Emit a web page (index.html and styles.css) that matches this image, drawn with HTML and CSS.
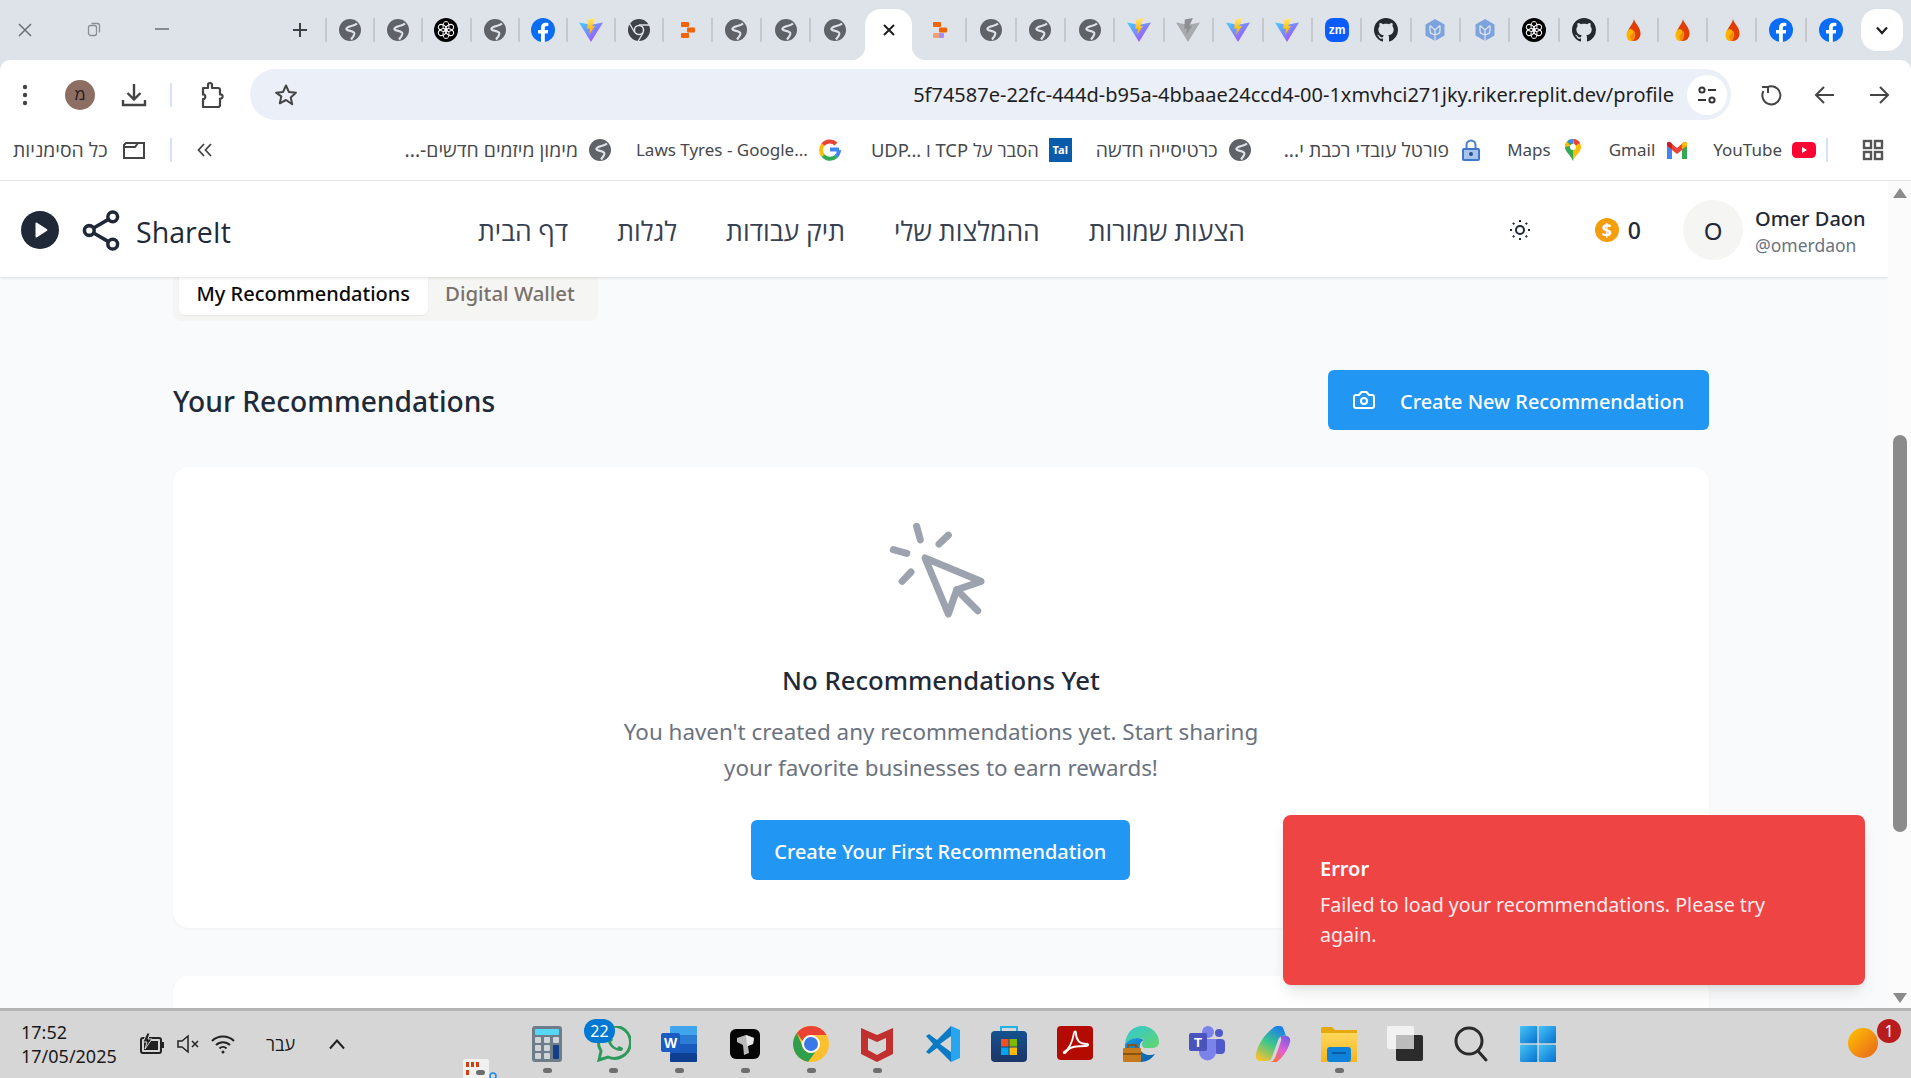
FILE: index.html
```html
<!DOCTYPE html>
<html lang="en">
<head>
<meta charset="utf-8">
<title>ShareIt</title>
<link rel="stylesheet" href="styles.css">
</head>
<body>
<svg class="defs" aria-hidden="true">
  <defs>
    <linearGradient id="gv" x1="0" y1="0" x2="1" y2="1"><stop offset="0" stop-color="#41d1ff"/><stop offset="1" stop-color="#bd34fe"/></linearGradient>
    <linearGradient id="gb" x1="0" y1="0" x2="0" y2="1"><stop offset="0" stop-color="#ffea83"/><stop offset=".5" stop-color="#ffc62b"/><stop offset="1" stop-color="#ffa800"/></linearGradient>
    <linearGradient id="gs" x1="0" y1="0" x2="0" y2="1"><stop offset="0" stop-color="#15528f"/><stop offset="1" stop-color="#1c3566"/></linearGradient>
    <linearGradient id="ge" x1="0" y1="0" x2="1" y2="1"><stop offset="0" stop-color="#30c7d8"/><stop offset="1" stop-color="#63d66b"/></linearGradient>
    <linearGradient id="ge2" x1="0" y1="0" x2="1" y2="1"><stop offset="0" stop-color="#1b9de2"/><stop offset="1" stop-color="#0c5aa6"/></linearGradient>
    <linearGradient id="gc" x1=".7" y1="0" x2=".2" y2="1"><stop offset="0" stop-color="#1a7fe8"/><stop offset=".5" stop-color="#3ec78a"/><stop offset="1" stop-color="#f9c22e"/></linearGradient>
    <linearGradient id="gc2" x1=".8" y1="0" x2=".2" y2="1"><stop offset="0" stop-color="#7b5ce8"/><stop offset=".5" stop-color="#e25fd0"/><stop offset="1" stop-color="#f7733c"/></linearGradient>
    <linearGradient id="gf" x1="0" y1="0" x2="0" y2="1"><stop offset="0" stop-color="#ffd75c"/><stop offset="1" stop-color="#f5b51e"/></linearGradient>
    <linearGradient id="gw" x1="0" y1="0" x2="1" y2="1"><stop offset="0" stop-color="#47c4f7"/><stop offset="1" stop-color="#0670cf"/></linearGradient>
    <symbol id="globe" viewBox="0 0 24 24"><circle cx="12" cy="12" r="11" fill="#5f6368"/><path d="M19 5.500C16 8.500 10 7.500 8.500 10.500 7.500 13 13 12 16 14.500 17.500 16 15 19 13 21.500" fill="none" stroke="#dee3ea" stroke-width="2.200"/></symbol>
    <symbol id="openai" viewBox="0 0 24 24"><circle cx="12" cy="12" r="12" fill="#000"/><g fill="none" stroke="#fff" stroke-width="1"><ellipse cx="12" cy="7.800" rx="3" ry="4.200"/><ellipse cx="12" cy="7.800" rx="3" ry="4.200" transform="rotate(60 12 12)"/><ellipse cx="12" cy="7.800" rx="3" ry="4.200" transform="rotate(120 12 12)"/><ellipse cx="12" cy="7.800" rx="3" ry="4.200" transform="rotate(180 12 12)"/><ellipse cx="12" cy="7.800" rx="3" ry="4.200" transform="rotate(240 12 12)"/><ellipse cx="12" cy="7.800" rx="3" ry="4.200" transform="rotate(300 12 12)"/></g></symbol>
    <symbol id="fb" viewBox="0 0 24 24"><circle cx="12" cy="12" r="12" fill="#0b6cf5"/><path d="M16.700 15.500l.5-3.500h-3.400V9.800c0-1 .5-1.900 2-1.900h1.500V5c-.9-.1-1.800-.2-2.700-.2-2.800 0-4.600 1.700-4.600 4.700V12H7v3.500h3V24h3.800v-8.500z" fill="#fff"/></symbol>
    <symbol id="vite" viewBox="0 0 24 24"><path d="M0 4.500 12 24 24 4.500 12 6.800z" fill="url(#gv)"/><path d="M17 0 8.800 1.500 8.300 11l2.700-.5-.9 6.500 6-9.300-3 .5z" fill="url(#gb)"/></symbol>
    <symbol id="vitegrey" viewBox="0 0 24 24"><path d="M0 4.500 12 24 24 4.500 12 6.800z" fill="#a9abae"/><path d="M17 0 8.800 1.500 8.300 11l2.700-.5-.9 6.500 6-9.300-3 .5z" fill="#8d8f92"/></symbol>
    <symbol id="chromemono" viewBox="0 0 24 24"><circle cx="12" cy="12" r="11" fill="#3f4347"/><g stroke="#dee3ea" stroke-width="1.400"><path d="M12 7h10.500M7.700 14.500 2.500 5.500M16.300 14.500 11 23.500"/></g><circle cx="12" cy="12" r="5.300" fill="#dee3ea"/><circle cx="12" cy="12" r="3.800" fill="#3f4347"/></symbol>
    <symbol id="rep" viewBox="0 0 24 24"><g fill="#f26207"><rect x="6" y="4" width="8" height="5" rx="1"/><rect x="12" y="9.500" width="8" height="5" rx="1"/><rect x="6" y="15" width="8" height="5" rx="1"/></g></symbol>
    <symbol id="rep2" viewBox="0 0 24 24"><rect x="6" y="4" width="8" height="5" rx="1" fill="#f26207"/><rect x="12" y="9.500" width="8" height="5" rx="1" fill="#f26207"/><rect x="6" y="15" width="8" height="5" rx="1" fill="#f2a070"/><rect x="12" y="15" width="5" height="5" rx="1" fill="#a78bfa"/></symbol>
    <symbol id="zm" viewBox="0 0 24 24"><rect width="24" height="24" rx="8" fill="#0b5cff"/><text x="12" y="16" text-anchor="middle" font-family="Liberation Sans, sans-serif" font-size="12" font-weight="700" fill="#fff">zm</text></symbol>
    <symbol id="gh" viewBox="0 0 16 16"><path fill="#24292f" d="M8 0C3.580 0 0 3.580 0 8c0 3.540 2.290 6.530 5.470 7.590.4.07.55-.17.55-.38 0-.19-.01-.82-.01-1.490-2.010.37-2.530-.49-2.690-.94-.09-.23-.48-.94-.82-1.130-.28-.15-.68-.52-.01-.53.63-.01 1.080.58 1.230.82.72 1.210 1.870.87 2.330.66.07-.52.28-.87.51-1.070-1.780-.2-3.640-.89-3.640-3.950 0-.87.31-1.590.82-2.150-.08-.2-.36-1.020.08-2.120 0 0 .67-.21 2.200.82.64-.18 1.320-.27 2-.27.68 0 1.360.09 2 .27 1.530-1.040 2.200-.82 2.200-.82.44 1.100.16 1.920.08 2.120.51.56.82 1.270.82 2.150 0 3.070-1.870 3.750-3.650 3.950.29.25.54.73.54 1.480 0 1.070-.01 1.930-.01 2.200 0 .21.15.46.55.38A8.013 8.013 0 0016 8c0-4.420-3.580-8-8-8z"/></symbol>
    <symbol id="hex" viewBox="0 0 24 24"><path d="M12 1 21.500 6.500v11L12 23 2.500 17.500v-11z" fill="#7da3de"/><path d="M12 23V12M7 7.500 12 12l5-4.500M7 7.500v5c0 2.500 2 4 5 4s5-1.500 5-4v-5" fill="none" stroke="#dee3ea" stroke-width="1.300"/></symbol>
    <symbol id="fire" viewBox="0 0 24 24"><path d="M13 1c.5 4 6.500 8 6.500 14.500 0 4.500-3 7.500-6.500 7.500s-6.500-3-6.500-7C6.500 10 12 7 13 1z" fill="#e23c00"/><ellipse cx="9.500" cy="17" rx="4" ry="6" fill="#ffb300"/><path d="M13.500 13c1.500 2.500 1 7-1.500 10-2-1-3-3-2.800-5z" fill="#f58a07"/></symbol>
  </defs>
</svg>

<header class="chrome">
  <div class="tabstrip">
    <div class="winctl">
      <span class="winbtn"><svg width="18" height="18" viewBox="0 0 18 18"><path d="M3 3l12 12M15 3 3 15" stroke="#6a6f75" stroke-width="1.500"/></svg></span>
      <span class="winbtn"><svg width="16" height="16" viewBox="0 0 16 16"><rect x="2.500" y="4.500" width="8" height="10" rx="2" fill="none" stroke="#8a8e94" stroke-width="1.300"/><path d="M5.500 2.500h6a2 2 0 0 1 2 2v7" fill="none" stroke="#8a8e94" stroke-width="1.300"/></svg></span>
      <span class="winbtn"><svg width="16" height="16" viewBox="0 0 16 16"><path d="M1 8h14" stroke="#6a6f75" stroke-width="1.500"/></svg></span>
    </div>
    <span class="plus"><svg width="18" height="18" viewBox="0 0 18 18"><path d="M9 2v14M2 9h14" stroke="#3c4043" stroke-width="2"/></svg></span>
    <span class="tab"><svg class="fav"><use href="#globe"/></svg></span>
    <span class="tab"><svg class="fav"><use href="#globe"/></svg></span>
    <span class="tab"><svg class="fav"><use href="#openai"/></svg></span>
    <span class="tab"><svg class="fav"><use href="#globe"/></svg></span>
    <span class="tab"><svg class="fav"><use href="#fb"/></svg></span>
    <span class="tab"><svg class="fav"><use href="#vite"/></svg></span>
    <span class="tab"><svg class="fav"><use href="#chromemono"/></svg></span>
    <span class="tab"><svg class="fav"><use href="#rep"/></svg></span>
    <span class="tab wide"><svg class="fav"><use href="#globe"/></svg></span>
    <span class="tab wide"><svg class="fav"><use href="#globe"/></svg></span>
    <span class="tab wide"><svg class="fav"><use href="#globe"/></svg></span>
    <span class="tab-active"><svg width="16" height="16" viewBox="0 0 16 16"><path d="M3 3l10 10M13 3 3 13" stroke="#1f1f1f" stroke-width="2"/></svg></span>
    <span class="tab-next"><svg class="fav"><use href="#rep2"/></svg></span>
    <span class="tab wide"><svg class="fav"><use href="#globe"/></svg></span>
    <span class="tab wide"><svg class="fav"><use href="#globe"/></svg></span>
    <span class="tab wide"><svg class="fav"><use href="#globe"/></svg></span>
    <span class="tab wide"><svg class="fav"><use href="#vite"/></svg></span>
    <span class="tab wide"><svg class="fav"><use href="#vitegrey"/></svg></span>
    <span class="tab wide"><svg class="fav"><use href="#vite"/></svg></span>
    <span class="tab wide"><svg class="fav"><use href="#vite"/></svg></span>
    <span class="tab wide"><svg class="fav"><use href="#zm"/></svg></span>
    <span class="tab wide"><svg class="fav"><use href="#gh"/></svg></span>
    <span class="tab wide"><svg class="fav"><use href="#hex"/></svg></span>
    <span class="tab wide"><svg class="fav"><use href="#hex"/></svg></span>
    <span class="tab wide"><svg class="fav"><use href="#openai"/></svg></span>
    <span class="tab wide"><svg class="fav"><use href="#gh"/></svg></span>
    <span class="tab wide"><svg class="fav"><use href="#fire"/></svg></span>
    <span class="tab wide"><svg class="fav"><use href="#fire"/></svg></span>
    <span class="tab wide"><svg class="fav"><use href="#fire"/></svg></span>
    <span class="tab wide"><svg class="fav"><use href="#fb"/></svg></span>
    <span class="tab wide"><svg class="fav"><use href="#fb"/></svg></span>
    <span class="tabsearch"><svg width="16" height="16" viewBox="0 0 16 16"><path d="M3 5.500 8 11l5-5.500" fill="none" stroke="#1f1f1f" stroke-width="2.200"/></svg></span>
  </div>

  <div class="toolbar">
    <span class="tb-dots"><svg width="6" height="22" viewBox="0 0 6 22"><circle cx="3" cy="3" r="2.200" fill="#444"/><circle cx="3" cy="11" r="2.200" fill="#444"/><circle cx="3" cy="19" r="2.200" fill="#444"/></svg></span>
    <span class="tb-avatar"><span class="tb-avatar-c">מ</span></span>
    <span class="tb-btn"><svg width="26" height="26" viewBox="0 0 26 26" fill="none" stroke="#444" stroke-width="2.400"><path d="M13 2v15M6.500 11 13 17.500 19.500 11M2 18v5h22v-5"/></svg></span>
    <span class="tb-sep"></span>
    <span class="tb-btn"><svg width="26" height="28" viewBox="0 0 26 28" fill="none" stroke="#444" stroke-width="2.200"><path d="M4 7h5V3.500c0-2 4-2 4 0V7h6a2 2 0 0 1 2 2v4.500c3.500-.8 3.500 4.800 0 4V24a2 2 0 0 1-2 2H4V18c3 .5 3-5 0-4.500z" stroke-linejoin="round"/></svg></span>
    <div class="omnibox">
      <span class="star"><svg width="24" height="24" viewBox="0 0 24 24"><path d="M12 2.500l2.900 6.400 7 .8-5.200 4.700 1.500 6.900L12 17l-6.200 3.300 1.500-6.900L2.100 9.700l7-.8z" fill="none" stroke="#444" stroke-width="2" stroke-linejoin="round"/></svg></span>
      <span class="url">5f74587e-22fc-444d-b95a-4bbaae24ccd4-00-1xmvhci271jky.riker.replit.dev/profile</span>
      <span class="tune"><svg width="22" height="22" viewBox="0 0 22 22" fill="none" stroke="#333" stroke-width="2"><circle cx="6" cy="6" r="2.600"/><path d="M12 6h8M2 16h8"/><circle cx="16" cy="16" r="2.600"/></svg></span>
    </div>
    <div class="tb-navs">
      <span class="tb-nav"><svg width="24" height="24" viewBox="0 0 24 24" fill="none" stroke="#444" stroke-width="2"><path d="M8 4.500A9 9 0 1 1 4.500 8M9 10V4H3"/></svg></span>
      <span class="tb-nav"><svg width="24" height="24" viewBox="0 0 24 24" fill="none" stroke="#444" stroke-width="2"><path d="M21 12H4M11 4l-8 8 8 8"/></svg></span>
      <span class="tb-nav"><svg width="24" height="24" viewBox="0 0 24 24" fill="none" stroke="#444" stroke-width="2"><path d="M3 12h17M13 4l8 8-8 8"/></svg></span>
    </div>
  </div>

  <div class="bookmarks">
    <span class="bm b-all"><span class="he" dir="rtl">כל הסימניות</span><svg class="bic" viewBox="0 0 24 24" fill="none" stroke="#444" stroke-width="2"><path d="M2 20V7l2-2h18v15z"/><path d="M2 9h11l3-4"/></svg></span>
    <span class="bm-sep"></span>
    <span class="bm-more"><svg width="18" height="18" viewBox="0 0 18 18" fill="none" stroke="#444" stroke-width="1.800"><path d="M8 3 2.500 9 8 15M15 3 9.500 9 15 15"/></svg></span>
    <div class="bm-list">
      <span class="bm"><span class="he" dir="rtl">מימון מיזמים חדשים-...</span><svg class="bic"><use href="#globe"/></svg></span>
      <span class="bm">Laws Tyres - Google...<svg class="bic" viewBox="0 0 24 24" fill="none" stroke-width="4"><path d="M21 11.500h-9" stroke="#4285f4"/><path d="M21 12a9 9 0 0 1-3 6.500" stroke="#4285f4"/><path d="M18 18.500A9 9 0 0 1 5 17.500" stroke="#34a853"/><path d="M5 17.500a9 9 0 0 1 0-11" stroke="#fbbc05"/><path d="M5 6.500a9 9 0 0 1 13-.5" stroke="#ea4335"/></svg></span>
      <span class="bm bm-mix">UDP... ו TCP הסבר על<span class="tal">Tal</span></span>
      <span class="bm"><span class="he" dir="rtl">כרטיסייה חדשה</span><svg class="bic"><use href="#globe"/></svg></span>
      <span class="bm b-gap"><span class="he" dir="rtl">פורטל עובדי רכבת י...</span><svg class="bic" viewBox="0 0 24 24"><path d="M7.500 11V7a4.500 4.500 0 0 1 9 0v4" fill="none" stroke="#4a7fc9" stroke-width="2"/><rect x="3" y="10" width="18" height="13" rx="2" fill="#3f78c9"/><rect x="5" y="12" width="14" height="9" fill="#a9c4ea"/><circle cx="12" cy="16" r="2" fill="#28508f"/></svg></span>
      <span class="bm">Maps<svg class="bic" viewBox="0 0 24 24"><path d="M12 1a8 8 0 0 1 8 8c0 5-5 7-8 14z" fill="#fbbc04"/><path d="M12 1a8 8 0 0 0-8 8c0 5 5 7 8 14z" fill="#34a853"/><path d="M6 3.500A8 8 0 0 1 12 1v5z" fill="#4285f4"/><path d="M12 1a8 8 0 0 1 7 4l-5 3z" fill="#ea4335"/><path d="M4 9a8 8 0 0 1 2-5.500L10 8z" fill="#fbbc04"/><circle cx="12" cy="9" r="3" fill="#fff"/></svg></span>
      <span class="bm">Gmail<svg class="bic" viewBox="0 0 24 24"><path d="M2 8v13h5V11z" fill="#4285f4"/><path d="M22 8v13h-5V11z" fill="#34a853"/><path d="M2 5v3l10 8 10-8V5l-3-1-7 6-7-6z" fill="#ea4335"/><path d="M2 5a2.500 2.500 0 0 1 3-1l2 2v5L2 8z" fill="#c5221f"/><path d="M22 5a2.500 2.500 0 0 0-3-1l-2 2v5l5-3z" fill="#fbbc04"/></svg></span>
      <span class="bm">YouTube<svg class="bic" viewBox="0 0 24 24"><rect y="4" width="24" height="16" rx="4.500" fill="#ff0033"/><path d="M10 9v6l5-3z" fill="#fff"/></svg></span>
    </div>
    <span class="bm-sep bm-sep-r"></span>
    <span class="bm-grid"><svg width="22" height="22" viewBox="0 0 22 22" fill="none" stroke="#555" stroke-width="2.400"><rect x="2" y="2" width="7" height="7"/><rect x="13" y="2" width="7" height="7"/><rect x="2" y="13" width="7" height="7"/><rect x="13" y="13" width="7" height="7"/></svg></span>
  </div>
</header>

<div class="viewport">
  <div class="page">
    <nav class="nav">
      <span class="play"><svg width="38" height="38" viewBox="0 0 38 38"><circle cx="19" cy="19" r="19" fill="#1f2937"/><path d="M14.500 12.500v13a1 1 0 0 0 1.500.8l10-6.500a1 1 0 0 0 0-1.600l-10-6.500a1 1 0 0 0-1.500.8z" fill="#fff"/></svg></span>
      <span class="logo"><svg width="38" height="41" viewBox="2.500 1.500 19 21" fill="none" stroke="#1f2937" stroke-width="1.800"><circle cx="18" cy="5" r="2.500"/><circle cx="6" cy="12" r="2.500"/><circle cx="18" cy="19" r="2.500"/><path d="M8.200 13.300l7.600 4.400M15.800 6.300l-7.600 4.400"/></svg></span>
      <span class="brand">ShareIt</span>
      <div class="links">
        <span class="link">דף הבית</span>
        <span class="link">לגלות</span>
        <span class="link">תיק עבודות</span>
        <span class="link">ההמלצות שלי</span>
        <span class="link">הצעות שמורות</span>
      </div>
      <span class="sun"><svg width="24" height="24" viewBox="0 0 24 24" fill="none" stroke="#1f2937" stroke-width="2"><circle cx="12" cy="12" r="4"/><path d="M12 2v2M12 20v2M4.900 4.900l1.400 1.400M17.700 17.700l1.400 1.400M2 12h2M20 12h2M6.300 17.700l-1.400 1.400M19.100 4.900l-1.400 1.400"/></svg></span>
      <span class="coin"><span class="coin-c">$</span></span>
      <span class="coin-n">0</span>
      <span class="avatar">O</span>
      <div class="who"><span class="who-n">Omer Daon</span><span class="who-h">@omerdaon</span></div>
    </nav>
    <main class="content">
      <div class="tabs">
        <span class="ptab ptab-on">My Recommendations</span>
        <span class="ptab ptab-off">Digital Wallet</span>
      </div>
      <div class="head">
        <h2 class="h-title">Your Recommendations</h2>
        <span class="btn btn-new"><svg class="cam" width="24" height="24" viewBox="0 0 24 24" fill="none" stroke="#fff" stroke-width="2" stroke-linejoin="round"><path d="M14.500 4h-5L7 7H4a2 2 0 0 0-2 2v9a2 2 0 0 0 2 2h16a2 2 0 0 0 2-2V9a2 2 0 0 0-2-2h-3z"/><circle cx="12" cy="13" r="3"/></svg>Create New Recommendation</span>
      </div>
      <section class="card">
        <svg class="empty-ic" viewBox="0 0 24 24" fill="none" stroke="#9ca3af" stroke-width="1.500" stroke-linecap="round" stroke-linejoin="round"><path d="m9 9 5 12 1.800-5.200L21 14Z"/><path d="M7.200 2.200 8 5.100"/><path d="m5.100 8-2.900-.8"/><path d="M14 4.100 12 6"/><path d="m6 12-1.900 2"/><path d="M15.800 15.800 20.300 20.300"/></svg>
        <h3 class="empty-t">No Recommendations Yet</h3>
        <p class="empty-p">You haven't created any recommendations yet. Start sharing your favorite businesses to earn rewards!</p>
        <span class="btn btn-first">Create Your First Recommendation</span>
      </section>
      <section class="card card-next"></section>
    </main>
  </div>
  <div class="scrollbar">
    <span class="sb-up"></span>
    <span class="sb-thumb"></span>
    <span class="sb-down"></span>
  </div>
  <aside class="toast">
    <div class="toast-t">Error</div>
    <div class="toast-m">Failed to load your recommendations. Please try again.</div>
  </aside>
</div>

<footer class="taskbar">
  <div class="clock"><span>17:52</span><span>17/05/2025</span></div>
  <div class="tray">
    <svg width="26" height="24" viewBox="0 0 26 24"><rect x="2" y="6" width="20" height="15" rx="2" fill="none" stroke="#222" stroke-width="2"/><rect x="5" y="9" width="14" height="9" fill="#222"/><rect x="22" y="10" width="3" height="6" fill="#222"/><path d="M8 1 4 10h4l-2 7 7-10H9l2-6z" fill="#222" stroke="#d6d6d6"/></svg>
    <svg width="24" height="22" viewBox="0 0 24 22" fill="none" stroke="#222" stroke-width="1.500"><path d="M2 8h4l6-5v16l-6-5H2z"/><path d="M16 8l6 6M22 8l-6 6"/></svg>
    <svg width="26" height="24" viewBox="0 0 26 24" fill="none" stroke="#222" stroke-width="2"><path d="M2 9a16 16 0 0 1 22 0M6 13a10 10 0 0 1 14 0M9.500 16.500a5 5 0 0 1 7 0"/><circle cx="13" cy="20" r="1.500" fill="#222" stroke="none"/></svg>
    <span class="lang">עבר</span>
    <svg width="18" height="12" viewBox="0 0 18 12" fill="none" stroke="#222" stroke-width="2"><path d="M2 10.500 9 2.500l7 8"/></svg>
  </div>
  <div class="apps">
    <span class="app"><svg class="app-ic" viewBox="0 0 36 36"><rect x="3" width="30" height="36" rx="3" fill="#6f7d8b"/><rect x="6" y="3" width="24" height="6" rx="1" fill="#56d7f5"/><g fill="#cfd4d9"><rect x="6" y="11" width="6" height="6" rx="1"/><rect x="15" y="11" width="6" height="6" rx="1"/><rect x="24" y="11" width="6" height="6" rx="1"/><rect x="6" y="19" width="6" height="6" rx="1"/><rect x="15" y="19" width="6" height="6" rx="1"/><rect x="6" y="27" width="6" height="6" rx="1"/><rect x="15" y="27" width="6" height="6" rx="1"/></g><rect x="24" y="19" width="6" height="14" rx="1" fill="#123f86"/></svg><i class="dot"></i></span>
    <span class="app app-wa"><svg class="app-ic" viewBox="0 0 36 36" fill="none" stroke="#2c9a5b" stroke-width="3"><path d="M4 34l2-9A16 16 0 1 1 13 31z"/><path d="M12 11c0 7 6 14 14 14 1.500 0 2-2 2-3l-4-2-2 2c-3-1-5-4-6-6l2-2-2-4c-1 0-4 0-4 1z" fill="#2c9a5b" stroke="none"/></svg><span class="wa-badge">22</span><i class="dot"></i></span>
    <span class="app"><svg class="app-ic" viewBox="0 0 36 36"><rect x="9" width="27" height="9" rx="1" fill="#41a5ee"/><rect x="9" y="9" width="27" height="9" fill="#2b7cd3"/><rect x="9" y="18" width="27" height="9" fill="#185abd"/><rect x="9" y="27" width="27" height="9" rx="1" fill="#103f91"/><rect y="7" width="19" height="19" rx="2" fill="#1a5bc4"/><text x="9.500" y="22" text-anchor="middle" font-family="Liberation Sans, sans-serif" font-size="14" font-weight="700" fill="#fff">W</text></svg><i class="dot"></i></span>
    <span class="app"><svg class="app-ic" viewBox="0 0 36 36"><rect x="3" y="3" width="30" height="30" rx="6" fill="#050505"/><path d="M10 12 19 9l8 3-1 6-5 2 1 7-5 2-1-10-6-3z" fill="#b9b9b9"/><path d="M19 9l8 3-1 6-6 2z" fill="#e7e7e7"/></svg><i class="dot"></i></span>
    <span class="app"><svg class="app-ic" viewBox="0 0 36 36"><circle cx="18" cy="18" r="18" fill="#fbc02d"/><path d="M3.900 6.900A18 18 0 0 0 15.200 35.800L22.500 25.800A9 9 0 0 1 10.200 22.500z" fill="#2f9e4d"/><path d="M18 0a18 18 0 0 1 15.600 9H18a9 9 0 0 0-8.500 6L3.900 6.900A18 18 0 0 1 18 0z" fill="#ea4335"/><circle cx="18" cy="18" r="9" fill="#fff"/><circle cx="18" cy="18" r="7" fill="#3b78e7"/></svg><i class="dot"></i></span>
    <span class="app"><svg class="app-ic" viewBox="0 0 36 36"><path fill-rule="evenodd" d="M2 2 18 9 34 2V28L18 36 2 28zM9 12V24l9 5 9-5V12L18 16z" fill="#c1302e"/></svg><i class="dot"></i></span>
    <span class="app"><svg class="app-ic" viewBox="0 0 36 36"><path d="M26 0 12 14 4 8 1 10l7 8-7 8 3 2 8-6 14 14z" fill="#0b7ac4"/><path d="M26 0l9 4v28l-9 4z" fill="#26a6f0"/><path d="M26 10v16L15 18z" fill="#d6d6d6"/></svg><i class="dot dot-off"></i></span>
    <span class="app"><svg class="app-ic" viewBox="0 0 36 36"><path d="M10 7V1h16v6" fill="none" stroke="#1eb4ea" stroke-width="2"/><rect y="5" width="36" height="31" rx="4" fill="url(#gs)"/><rect x="10" y="13" width="7.500" height="7.500" fill="#f25022"/><rect x="18.500" y="13" width="7.500" height="7.500" fill="#7fba00"/><rect x="10" y="21.500" width="7.500" height="7.500" fill="#00a4ef"/><rect x="18.500" y="21.500" width="7.500" height="7.500" fill="#ffb900"/></svg><i class="dot dot-off"></i></span>
    <span class="app"><svg class="app-ic" viewBox="0 0 36 36"><rect width="36" height="34" rx="4" fill="#b30b00"/><path d="M7 26c4-2 8-8 10-19 .5-2 2-2 2 0 0 7 4 11 11 11 2 0 1.500 2-1 2-8 0-16 0-20 6-1 2-3 1-2 0z" fill="none" stroke="#fff" stroke-width="1.800"/></svg><i class="dot dot-off"></i></span>
    <span class="app"><svg class="app-ic" viewBox="0 0 36 36"><path d="M2 18C3 6 11 0 19 0c10 0 17 8 17 16 0 4-3 6-8 6h-6c-4-1-4-5-1-8-3-3-12-3-19 4z" fill="url(#ge)"/><path d="M2 18c5-6 13-8 19-4-5 2-6 9-1 13 3 2 8 3 12 1-3 5-9 8-14 8C10 36 1 28 2 18z" fill="url(#ge2)"/><rect y="22" width="18" height="14" rx="1" fill="#c67a1c"/><path d="M5 22v-3h8v3" fill="none" stroke="#8a5312" stroke-width="2"/><rect y="27" width="18" height="2" fill="#8a5312"/></svg><i class="dot dot-off"></i></span>
    <span class="app"><svg class="app-ic" viewBox="0 0 36 36"><circle cx="30" cy="7" r="4" fill="#5059c9"/><rect x="25" y="13" width="11" height="15" rx="4" fill="#5059c9"/><circle cx="19" cy="6" r="6" fill="#7b83eb"/><path d="M10 13h17v13a8.500 8.500 0 0 1-17 0z" fill="#7b83eb"/><rect y="7" width="18" height="18" rx="2" fill="#4b53bc"/><text x="9" y="21" text-anchor="middle" font-family="Liberation Sans, sans-serif" font-size="13" font-weight="700" fill="#fff">T</text></svg><i class="dot dot-off"></i></span>
    <span class="app"><svg class="app-ic" viewBox="0 0 36 36"><path d="M18 2c1-1 2-2 4-2h3c2 0 3 1 3.500 3L31 10c-3-1-6 0-7.500 3L17 31c-1 3-3 4-6 4H6c-4 0-6-3-5-7C3 18 10 8 18 2z" fill="url(#gc)"/><path d="M25 10h6c3 0 5 3 4 6-2 8-7 15-12 19-1 1-2 1-3 1h-6c3 0 5-2 6-4l6-17c.5-2 0-4-1-5z" fill="url(#gc2)"/></svg><i class="dot dot-off"></i></span>
    <span class="app"><svg class="app-ic" viewBox="0 0 36 36"><path d="M0 3a2 2 0 0 1 2-2h9l3 3h22v32H0z" fill="#e5a90b"/><path d="M0 7h36v29H0z" fill="url(#gf)"/><rect x="6" y="21" width="24" height="15" rx="3" fill="#0e82d9"/><rect x="11" y="26" width="14" height="2" fill="#0a5aa5"/></svg><i class="dot"></i></span>
    <span class="app"><svg class="app-ic" viewBox="0 0 36 36"><rect x="9" y="9" width="27" height="26" rx="2" fill="#2b2b2b"/><rect x="0" y="0" width="27" height="23" rx="2" fill="#f2f2f2"/><rect x="9" y="9" width="18" height="14" fill="#bcbcbc"/></svg><i class="dot dot-off"></i></span>
    <span class="app"><svg class="app-ic" viewBox="0 0 36 36" fill="none" stroke="#2a2a2a" stroke-width="3"><circle cx="16" cy="15" r="13"/><path d="M25 25l8 9" stroke-linecap="round"/></svg><i class="dot dot-off"></i></span>
    <span class="app app-win"><svg class="app-ic" viewBox="0 0 36 36"><rect width="17.300" height="17.300" rx="1" fill="url(#gw)"/><rect x="18.700" width="17.300" height="17.300" rx="1" fill="url(#gw)"/><rect y="18.700" width="17.300" height="17.300" rx="1" fill="url(#gw)"/><rect x="18.700" y="18.700" width="17.300" height="17.300" rx="1" fill="url(#gw)"/></svg><i class="dot dot-off"></i></span>
  </div>
  <svg class="tb-widget" width="34" height="20" viewBox="0 0 34 20"><rect width="26" height="20" rx="2" fill="#f1f1f1"/><g fill="#d1400f"><rect x="3" y="3" width="3" height="5"/><rect x="8" y="3" width="3" height="5"/><rect x="13" y="3" width="3" height="5"/><rect x="3" y="11" width="3" height="5"/></g><rect x="13" y="11" width="9" height="5" rx="2.500" fill="#6e6e6e"/><circle cx="30" cy="17" r="3" fill="none" stroke="#1e88e5" stroke-width="1.500"/></svg>
  <span class="notify"><span class="notify-b">1</span></span>
</footer>
</body>
</html>
```

FILE: styles.css
```css
* { box-sizing: border-box; }
html, body { margin: 0; height: 100%; }
body {
  width: 1911px; height: 1078px; overflow: hidden;
  display: flex; flex-direction: column;
  font-family: "Noto Sans", "Open Sans", "Liberation Sans", sans-serif;
  background: #dee3ea;
}
.defs { position: absolute; width: 0; height: 0; }

/* browser chrome */
.chrome { flex: none; background: #dee3ea; }
.tabstrip { height: 60px; display: flex; align-items: center; }
.winctl { display: flex; gap: 18.500px; }
.winbtn { width: 50px; display: flex; justify-content: center; }
.plus { width: 50px; margin-left: 88px; display: flex; justify-content: center; }
.tab { width: 48.200px; height: 24px; border-left: 2px solid #c6c8cb; display: flex; justify-content: center; align-items: center; flex: none; }
.tab.wide { width: 49.400px; }
.fav { width: 24px; height: 24px; display: block; }
.tab-active { position: relative; align-self: flex-end; width: 47px; height: 51px; margin-left: 6.500px; background: #fff; border-radius: 16px 16px 0 0; display: flex; align-items: center; justify-content: center; padding-bottom: 9px; }
.tab-active::before, .tab-active::after { content: ""; position: absolute; bottom: 0; width: 14px; height: 14px; }
.tab-active::before { left: -14px; background: radial-gradient(circle at 0 0, transparent 14px, #fff 14.500px); }
.tab-active::after { right: -14px; background: radial-gradient(circle at 100% 0, transparent 14px, #fff 14.500px); }
.tab-next { width: 53px; display: flex; justify-content: center; }
.tabsearch { width: 42px; height: 42px; margin-left: 7px; background: #fff; border-radius: 16px; display: flex; align-items: center; justify-content: center; }

.toolbar { height: 60px; padding-top: 9px; background: #fff; border-radius: 10px 10px 0 0; display: flex; align-items: center; }
.tb-dots { width: 50px; display: flex; justify-content: center; }
.tb-avatar { width: 60px; display: flex; justify-content: center; }
.tb-avatar-c { width: 30px; height: 30px; border-radius: 50%; background: #8d6e63; color: #2b1f1b; font-size: 16px; font-family: "Liberation Sans", sans-serif; display: flex; align-items: center; justify-content: center; }
.tb-btn { width: 48px; display: flex; justify-content: center; }
.tb-sep { width: 2px; height: 24px; margin: 0 16px 0 12px; background: #d3e3fd; }
.omnibox { width: 1481px; height: 51px; margin-left: 14px; background: #ebf0f8; border-radius: 26px; display: flex; align-items: center; padding-left: 24px; }
.star { width: 24px; display: flex; }
.url { flex: 1; text-align: right; font-size: 20px; color: #1f1f1f; white-space: nowrap; }
.tune { width: 40px; height: 40px; margin: 0 4px 0 13px; border-radius: 50%; background: #fff; display: flex; align-items: center; justify-content: center; }
.tb-navs { display: flex; margin-left: 13px; }
.tb-nav { width: 54px; display: flex; justify-content: center; }

.bookmarks { height: 61px; background: #fff; border-bottom: 1px solid #e1e3e6; padding: 0 0 1px 13px; display: flex; align-items: center; }
.bm { display: flex; align-items: center; gap: 10px; font-size: 17px; color: #47494c; white-space: nowrap; }
.he { font-size: 19.400px; }
.bm-mix { font-size: 18.400px; margin-left: 5px; }
.b-all { gap: 14px; }
.bic { width: 24px; height: 24px; flex: none; }
.bm-sep { width: 2px; height: 24px; margin-left: 24px; background: #d3e3fd; }
.bm-more { margin-left: 24px; display: flex; }
.bm-list { margin-left: auto; display: flex; gap: 24px; align-items: center; }
.b-gap { margin-left: 8px; }
.tal { width: 23px; height: 24px; background: #0a5cab; color: #fff; font-size: 11px; font-weight: 700; display: flex; align-items: center; justify-content: center; }
.bm-sep-r { margin-left: 10px; }
.bm-grid { margin: 0 27px 0 34px; display: flex; }

/* page */
.viewport { flex: none; height: 827px; position: relative; display: flex; overflow: hidden; background: #f9fafb; }
.page { width: 1888px; overflow: hidden; }
.nav { position: relative; z-index: 2; height: 96px; padding: 2px 0 0 21px; background: #fff; box-shadow: 0 1px 3px rgba(0,0,0,.12); display: flex; align-items: center; }
.play { display: flex; }
.logo { display: flex; margin-left: 23px; }
.brand { margin: 2px 0 0 16px; font-family: "Open Sans", "Noto Sans", sans-serif; font-size: 28.600px; font-weight: 500; color: #1f2937; }
.links { display: flex; gap: 49px; margin-left: 247px; padding-top: 1px; }
.link { font-family: "Open Sans", "Liberation Sans", sans-serif; font-size: 26.500px; font-weight: 500; color: #374151; }
.sun { display: flex; margin-left: auto; }
.coin { margin-left: 63px; width: 24px; height: 24px; border-radius: 50%; background: #f59e0b; display: flex; align-items: center; justify-content: center; }
.coin-c { color: #fff; font-size: 18px; font-weight: 700; line-height: 1; }
.coin-n { margin-left: 9px; font-size: 23px; font-weight: 500; color: #1f2937; }
.avatar { margin-left: 42px; width: 60px; height: 60px; border-radius: 50%; background: #f5f5f4; color: #1f2937; font-size: 24px; display: flex; align-items: center; justify-content: center; }
.who { margin: 2px 23px 0 12px; width: 110px; display: flex; flex-direction: column; white-space: nowrap; }
.who-n { font-size: 20px; font-weight: 500; color: #1f2937; line-height: 28px; }
.who-h { font-size: 17.500px; color: #6b7280; line-height: 24px; }

.content { margin: -12px 179px 0 173px; }
.tabs { display: inline-flex; padding: 6px; background: #f5f5f4; border-radius: 8px; vertical-align: top; }
.ptab { height: 44px; padding: 0 17.500px; display: flex; align-items: center; font-size: 20px; font-weight: 500; color: #78716c; border-radius: 6px; }
.ptab-off { font-size: 20.400px; }
.ptab-on { background: #fff; color: #0c0a09; box-shadow: 0 1px 2px rgba(0,0,0,.06); }
.head { margin-top: 49px; display: flex; align-items: center; justify-content: space-between; }
.h-title { margin: 2px 0 0; font-size: 28.200px; font-weight: 500; color: #1f2937; }
.btn { height: 60px; padding-top: 2px; background: #2196f3; color: #fff; border-radius: 6px; font-size: 19.900px; font-weight: 500; display: flex; align-items: center; white-space: nowrap; }
.btn-new { padding-left: 24px; padding-right: 24px; gap: 24px; width: 381px; }
.cam { flex: none; margin-top: -2px; }
.card { margin-top: 37px; padding: 49px 0 48px; background: #fff; border-radius: 16px; box-shadow: 0 1px 3px rgba(0,0,0,.04); display: flex; flex-direction: column; align-items: center; }
.empty-ic { width: 112px; height: 112px; display: block; margin-right: 4px; }
.empty-t { margin: 35px 0 0; font-size: 25.700px; line-height: 36px; font-weight: 500; color: #1f2937; }
.empty-p { margin: 15px 0 0; width: 672px; font-size: 22.400px; line-height: 36px; color: #6b7280; text-align: center; }
.btn-first { margin: 34px 1.400px 0 0; width: 379px; justify-content: center; }
.card-next { margin-top: 48px; height: 200px; padding: 0; }

.scrollbar { width: 23px; padding: 7px 0 5px; background: #fbfbfb; display: flex; flex-direction: column; align-items: center; }
.sb-up { width: 0; height: 0; border: 7px solid transparent; border-top: 0; border-bottom: 10px solid #8b8b8b; }
.sb-thumb { width: 14px; height: 397px; margin-top: 237px; background: #8b8b8b; border-radius: 7px; }
.sb-down { width: 0; height: 0; margin-top: auto; border: 7px solid transparent; border-bottom: 0; border-top: 10px solid #8b8b8b; }

.toast { position: absolute; right: 46px; bottom: 23px; z-index: 3; width: 582px; padding: 40px 37px 35px; background: #ef4444; color: #fff; border-radius: 8px; box-shadow: 0 10px 15px -3px rgba(0,0,0,.1), 0 4px 6px -4px rgba(0,0,0,.1); }
.toast-t { font-size: 20px; line-height: 28px; font-weight: 600; }
.toast-m { margin-top: 7px; max-width: 490px; font-size: 19.650px; line-height: 30px; opacity: .9; }

/* taskbar */
.taskbar { position: relative; flex: none; height: 70px; background: #d6d6d6; border-top: 3px solid #b3b3b3; display: flex; align-items: flex-start; }
.clock { width: 135px; padding: 10px 0 0 21px; display: flex; flex-direction: column; gap: 2px; font-size: 18px; line-height: 22px; color: #1a1a1a; white-space: nowrap; }
.tray { width: 379px; padding-top: 21px; display: flex; align-items: center; color: #1a1a1a; }
.tray svg:nth-child(1) { margin-left: 4px; }
.tray svg:nth-child(2) { margin-left: 11px; }
.tray svg:nth-child(3) { margin-left: 10px; }
.tray svg:nth-child(5) { margin-left: 33px; }
.lang { margin-left: 30px; font-size: 18px; font-family: "Open Sans", "Liberation Sans", sans-serif; }
.apps { display: flex; padding-top: 15px; }
.app { position: relative; width: 66px; display: flex; flex-direction: column; align-items: center; gap: 6px; }
.app-win { margin-left: 1px; }
.app-ic { width: 36px; height: 36px; display: block; }
.dot { width: 9px; height: 5px; border-radius: 3px; background: #6e6e6e; }
.dot-off { visibility: hidden; }
.wa-badge { position: absolute; left: 4px; top: -7px; width: 31px; height: 24px; border-radius: 12px; background: #0078d4; color: #fff; font-size: 16px; display: flex; align-items: center; justify-content: center; }
.tb-widget { position: absolute; left: 463px; top: 48px; }
.notify { position: absolute; left: 1848px; top: 17px; width: 30px; height: 30px; border-radius: 50%; background: linear-gradient(135deg, #ffc400, #e8631c); }
.notify-b { position: absolute; left: 29px; top: -9px; width: 24px; height: 24px; border-radius: 50%; background: #b91c1c; color: #fff; font-size: 16px; display: flex; align-items: center; justify-content: center; }
```
